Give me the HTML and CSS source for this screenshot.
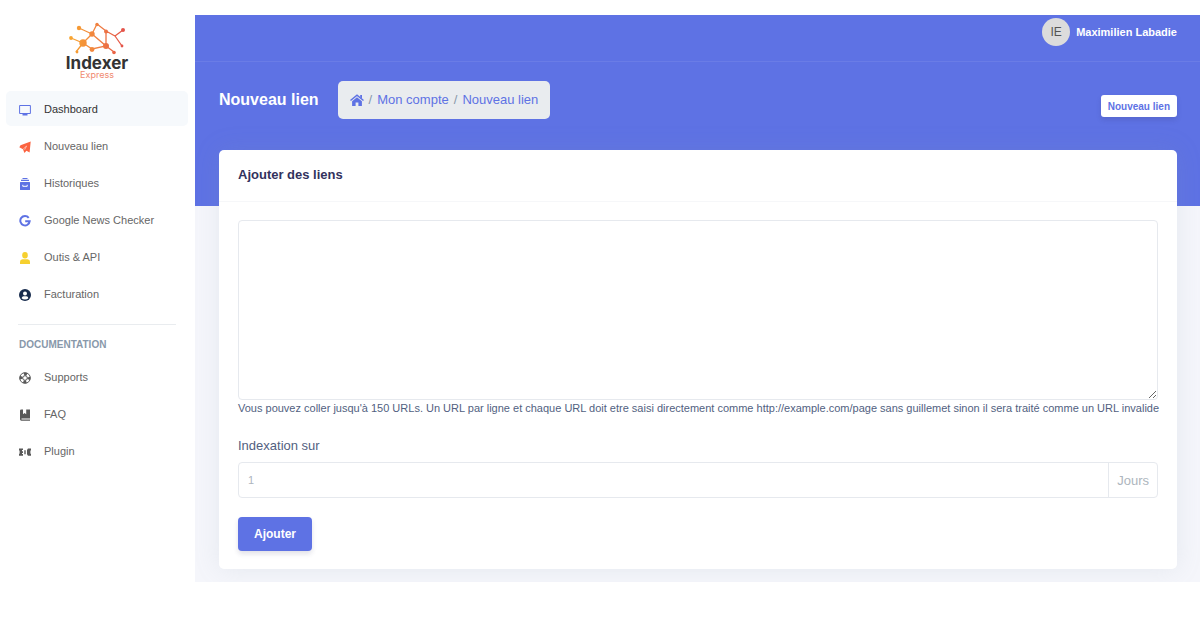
FILE: index.html
```html
<!DOCTYPE html>
<html lang="fr">
<head>
<meta charset="utf-8">
<meta name="viewport" content="width=device-width, initial-scale=1">
<title>Indexer Express - Nouveau lien</title>
<link rel="stylesheet" href="styles.css">
</head>
<body>
<div class="app">
  <aside class="sidebar">
    <a class="brand" href="#" aria-label="Indexer Express">
      <svg class="brand-mark" viewBox="0 0 58 34" aria-hidden="true">
        <defs>
          <linearGradient id="net" gradientUnits="userSpaceOnUse" x1="2" y1="0" x2="56" y2="0">
            <stop offset="0" stop-color="#f8a52f"/>
            <stop offset="0.55" stop-color="#ef7d42"/>
            <stop offset="1" stop-color="#e3524a"/>
          </linearGradient>
        </defs>
        <g fill="none" stroke="url(#net)" stroke-width="1.3">
          <path d="M11 6 24 12 29 2 38 9 47 14 55 8M47 14l7 10M38 9v15l8 6M24 12l14 12-14 3-9-6 9-9M15 21 3 16M15 21 8 30"/>
        </g>
        <g fill="url(#net)">
          <circle cx="11" cy="6" r="2.2"/><circle cx="24" cy="12" r="2.7"/><circle cx="29" cy="2.500" r="1.7"/>
          <circle cx="38" cy="9.500" r="2"/><circle cx="55" cy="8" r="2"/><circle cx="54" cy="24" r="1.400"/>
          <circle cx="38" cy="24" r="3"/><circle cx="46" cy="30.500" r="1.800"/><circle cx="24" cy="27.500" r="2.400"/>
          <circle cx="15" cy="21" r="3.700"/><circle cx="3" cy="16" r="1.900"/><circle cx="9" cy="30" r="1.400"/>
        </g>
      </svg>
      <span class="brand-name">Indexer</span>
      <span class="brand-sub">Express</span>
    </a>
    <nav class="menu" aria-label="Menu principal">
      <a class="item active" href="#"><svg class="icon indigo" viewBox="0 0 12 12"><path fill="none" stroke="currentColor" d="M.6 1.500h10.800v8H.6z"/><path fill="currentColor" d="M3.500 10h5v1.500h-5z"/></svg>Dashboard</a>
      <a class="item" href="#"><svg class="icon orange" viewBox="0 0 12 12"><path fill="currentColor" d="M11.700.5 10.600 11.500 7.500 9.700 5.400 12 4 8.200.3 6.200 1.500 4.300z"/><path fill="none" stroke="#fff" stroke-width=".5" d="M4.200 8 7.600 5 5.600 8.800"/></svg>Nouveau lien</a>
      <a class="item" href="#"><svg class="icon indigo" viewBox="0 0 12 12"><path fill="currentColor" d="M3.500 0h5v1h-5zM2 1.800h8v1.300H2zM1.600 4h8.800q.6 0 .6.600v6.800q0 .6-.6.600H1.600q-.6 0-.6-.6V4.600q0-.6.600-.6z"/><path fill="none" stroke="#fff" d="M3.800 6.800v1.500h4.400V6.800"/></svg>Historiques</a>
      <a class="item" href="#"><svg class="icon indigo" viewBox="0 0 12 12"><path fill="none" stroke="currentColor" stroke-width="2" d="M9.700 2.800A4.700 4.700 0 1 0 10.700 6.200H6.200"/></svg>Google News Checker</a>
      <a class="item" href="#"><svg class="icon yellow" viewBox="0 0 12 12"><ellipse cx="6" cy="3.200" rx="2.800" ry="3.200" fill="currentColor"/><path fill="currentColor" d="M1 12V9.800Q1 7.500 3.500 7.300h5Q11 7.500 11 9.800V12z"/></svg>Outis &amp; API</a>
      <a class="item" href="#"><svg class="icon navy" viewBox="0 0 12 12"><circle cx="6" cy="6" r="6" fill="currentColor"/><circle cx="6" cy="4.500" r="2" fill="#fff"/><path fill="#fff" d="M2.600 9.200q.4-1.900 2-1.900h2.800q1.600 0 2 1.900Q8 10.500 6 10.500T2.600 9.200z"/></svg>Facturation</a>
    </nav>
    <hr class="divider">
    <h2 class="menu-title">DOCUMENTATION</h2>
    <nav class="menu" aria-label="Documentation">
      <a class="item" href="#"><svg class="icon grey" viewBox="0 0 12 12"><g fill="none" stroke="currentColor"><circle cx="6" cy="6" r="5.300"/><circle cx="6" cy="6" r="2.300"/><circle cx="6" cy="6" r="3.900" stroke-width="2.800" stroke-dasharray="3 3.126" stroke-dashoffset="1.500"/></g></svg>Supports</a>
      <a class="item" href="#"><svg class="icon grey" viewBox="0 0 12 12"><path fill="currentColor" d="M2.300.5H4v4.800l1.600-1.200 1.600 1.200V.5H11v9H2.500v1H11v1.300H2.300Q1 11.600 1 10.200V1.800Q1 .5 2.300.5z"/></svg>FAQ</a>
      <a class="item" href="#"><svg class="icon grey" viewBox="0 0 12 12"><path fill="currentColor" d="M0 2.500h4v1.600H3v1.200h1v1.600H3v1.200h1v1.600H0V8l.6-.6V4.800L0 4.200zM12 2.500H9L8 4v4.200l1 1.500h3V8l-.6-.6V4.800l.6-.6zM5.300 4.200h1.400v4H5.300z"/></svg>Plugin</a>
    </nav>
  </aside>
  <main class="main">
    <div class="topbar">
      <a class="user" href="#"><span class="avatar">IE</span><span>Maximilien Labadie</span></a>
    </div>
    <header class="page-head">
      <h1 class="page-title">Nouveau lien</h1>
      <nav class="crumbs" aria-label="Fil d'Ariane">
        <a href="#" aria-label="Accueil"><svg class="home" viewBox="0 0 14 12"><path fill="none" stroke="currentColor" stroke-width="1.500" d="M.5 6.500 7 1.200l6.500 5.300"/><path fill="currentColor" d="M10.200 1h1.800v3.500l-1.800-1.500zM7 3.300l4.900 4V12H8.400V8.500H5.600V12H2.100V7.300z"/></svg></a>
        <span class="slash">/</span><a href="#">Mon compte</a>
        <span class="slash">/</span><a href="#">Nouveau lien</a>
      </nav>
      <button class="btn-small" type="button">Nouveau lien</button>
    </header>
    <section class="card">
      <h2 class="card-head">Ajouter des liens</h2>
      <form class="card-body">
        <textarea class="urls" aria-label="Liens" aria-describedby="urls-help"></textarea>
        <p class="help" id="urls-help">Vous pouvez coller jusqu'à 150 URLs. Un URL par ligne et chaque URL doit etre saisi directement comme http://example.com/page sans guillemet sinon il sera traité comme un URL invalide</p>
        <label class="label" for="days">Indexation sur</label>
        <div class="group">
          <input class="days" id="days" type="text" placeholder="1">
          <span class="unit">Jours</span>
        </div>
        <button class="btn-main" type="button">Ajouter</button>
      </form>
    </section>
  </main>
</div>
</body>
</html>
```
FILE: styles.css
```css
* { box-sizing: border-box; }
body {
  margin: 0;
  background: #fff;
  color: #525f7f;
  font-family: "Liberation Sans", Arial, sans-serif;
  font-size: 13px;
}
a { color: inherit; text-decoration: none; }
h1, h2, p { margin: 0; }
button, input, textarea { font-family: inherit; }

.app { display: flex; padding-top: 15px; }

.sidebar { flex: 0 0 195px; padding: 7px 7px 0 6px; }
.brand { display: flex; flex-direction: column; align-items: center; height: 69px; }
.brand-mark { width: 58px; height: 34px; flex: none; }
.brand-name { color: #333; font: 700 17px/14px Inter, sans-serif; }
.brand-sub { color: #f08a70; font: 9px/9px Inter, sans-serif; }
.menu { display: flex; flex-direction: column; gap: 2px; }
.item {
  display: flex;
  align-items: center;
  gap: 13px;
  height: 35px;
  padding-left: 13px;
  border-radius: 5px;
  color: #666;
  font-size: 11px;
}
.item.active { background: #f6f9fc; color: #333; }
.icon { width: 12px; height: 12px; margin-top: 2px; }
.indigo { color: #5e72e4; }
.orange { color: #fb6340; }
.yellow { color: #f6d02f; }
.navy { color: #172b4d; }
.grey { color: #595959; }
.divider { margin: 13px 12px 12px; border: 0; border-top: 1px solid #e9ecef; }
.menu-title {
  margin: 0 0 7px 13px;
  color: #8898aa;
  font-size: 10px;
  line-height: 15px;
}

.main {
  flex: 1;
  min-width: 0;
  padding-bottom: 13px;
  background: linear-gradient(#5e72e4 191px, #f5f6fb 191px);
}
.topbar {
  display: flex;
  justify-content: flex-end;
  height: 47px;
  padding: 3px 23px 0 0;
  border-bottom: 1px solid #6a7ce6;
}
.user { display: flex; align-items: center; gap: 6px; height: 28px; color: #fff; font-size: 11px; font-weight: 700; }
.avatar {
  display: grid;
  place-items: center;
  width: 28px;
  height: 28px;
  border-radius: 50%;
  background: #dcdcdc;
  color: #555;
  font-size: 12px;
  font-weight: 400;
}
.page-head { display: flex; align-items: center; height: 75px; padding: 0 23px 0 24px; }
.page-title { color: #fff; font-size: 16px; }
.crumbs {
  display: flex;
  align-items: center;
  gap: 5px;
  height: 38px;
  margin-left: 19px;
  padding: 0 12px;
  border-radius: 5px;
  background: #e9ecef;
  color: #5e72e4;
}
.home { display: block; width: 14px; height: 12px; }
.slash { color: #8898aa; }
.btn-small {
  height: 22px;
  margin: 13px 0 0 auto;
  padding: 0 7px;
  border: 0;
  border-radius: 3px;
  background: #fff;
  box-shadow: 0 3px 5px rgba(50, 50, 93, 0.15);
  color: #5e72e4;
  font-size: 10px;
  font-weight: 700;
}

.card {
  margin: 13px 23px 0 24px;
  border-radius: 5px;
  background: #fff;
  box-shadow: 0 0 26px rgba(136, 152, 170, 0.15);
}
.card-head {
  padding: 16px 19px 17px;
  border-bottom: 1px solid #f6f7f9;
  color: #32325d;
  font-size: 13px;
  line-height: 18px;
}
.card-body { padding: 18px 19px; }
.urls, .group { border: 1px solid #e6e9ee; border-radius: 4px; background: #fff; }
.urls { display: block; width: 100%; height: 180px; padding: 8px; font-size: 12px; }
.help { font-size: 11px; line-height: 16px; white-space: nowrap; }
.label { display: block; margin: 21px 0 7px; line-height: 18px; }
.group { display: flex; height: 36px; color: #adb5bd; }
.days { flex: 1; min-width: 0; padding: 0 9px; border: 0; background: none; font-size: 11px; }
.days::placeholder { color: #adb5bd; }
.unit { display: flex; align-items: center; padding: 0 8px; border-left: 1px solid #e6e9ee; }
.btn-main {
  height: 34px;
  margin-top: 19px;
  padding: 0 16px;
  border: 0;
  border-radius: 4px;
  background: #5e72e4;
  box-shadow: 0 3px 5px rgba(50, 50, 93, 0.14);
  color: #fff;
  font-size: 12px;
  font-weight: 700;
}
```
